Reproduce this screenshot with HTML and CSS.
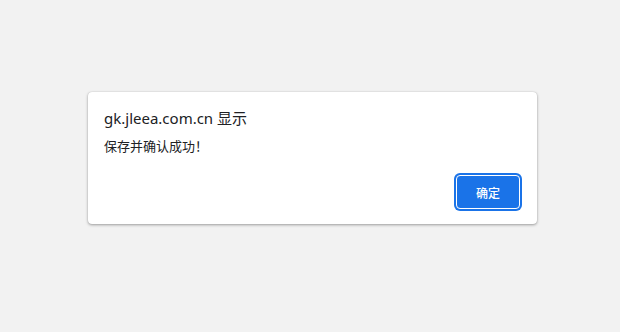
FILE: index.html
```html
<!DOCTYPE html>
<html lang="zh-CN">
<head>
    <meta charset="UTF-8">
    <meta name="viewport" content="width=device-width, initial-scale=1.0">
    <title>gk.jleea.com.cn</title>
    <link rel="stylesheet" href="styles.css">
</head>
<body>

<div class="dialog">
    <div class="dialog-title">gk.jleea.com.cn 显示</div>
    <div class="dialog-message">保存并确认成功！</div>
    <div class="dialog-buttons">
        <button class="ok-button">确定</button>
    </div>
</div>

</body>
</html>
```

FILE: styles.css
```css
body {
    margin: 0;
    height: 332px;
    background-color: #f2f2f2;
    font-family: "Noto Sans", "Noto Sans CJK SC", sans-serif;
    color: #202124;
}
.dialog {
    box-sizing: border-box;
    width: 449px;
    height: 132px;
    margin: 92px 0 0 88px;
    padding: 16px 16px 0 16px;
    background-color: #fff;
    border-radius: 4px;
    box-shadow: 0 1px 3px rgba(0, 0, 0, 0.35), 0 0 1px rgba(0, 0, 0, 0.2);
}
.dialog-title {
    font-size: 15px;
    line-height: 20px;
    margin-bottom: 9px;
}
.dialog-message {
    font-size: 13px;
    line-height: 18px;
}
.dialog-buttons {
    display: flex;
    justify-content: flex-end;
    margin-top: 20px;
    margin-right: 1px;
}
.ok-button {
    box-sizing: border-box;
    width: 64px;
    height: 34px;
    padding: 0;
    font-family: "Noto Sans CJK SC", sans-serif;
    font-size: 12px;
    font-weight: 500;
    color: #fff;
    background-color: #1a73e8;
    border: 1px solid #fff;
    border-radius: 4px;
    box-shadow: 0 0 0 2px #1a73e8;
    cursor: pointer;
}
```
